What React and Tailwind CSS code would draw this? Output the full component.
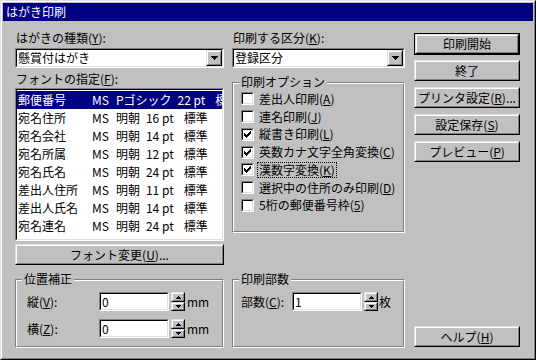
import React from "react";

const FONT = { fontFamily: '"Noto Sans CJK JP", "Noto Sans", sans-serif' };

const fonts = [
  ["郵便番号", "Pゴシック", "22 pt"],
  ["宛名住所", "明朝", "16 pt"],
  ["宛名会社", "明朝", "14 pt"],
  ["宛名所属", "明朝", "12 pt"],
  ["宛名氏名", "明朝", "24 pt"],
  ["差出人住所", "明朝", "11 pt"],
  ["差出人氏名", "明朝", "14 pt"],
  ["宛名連名", "明朝", "24 pt"],
];

const options = [
  { label: "差出人印刷", key: "A", checked: false },
  { label: "連名印刷", key: "J", checked: false },
  { label: "縦書き印刷", key: "L", checked: true },
  { label: "英数カナ文字全角変換", key: "C", checked: true },
  { label: "漢数字変換", key: "K", checked: true, focus: true },
  { label: "選択中の住所のみ印刷", key: "D", checked: false },
  { label: "5桁の郵便番号枠", key: "5", checked: false },
];

// 3D edges, win95 style
const Raised = ({ className = "", innerClass = "", children }) => (
  <div className={`border border-t-[#dfdfdf] border-l-[#dfdfdf] border-r-black border-b-black ${className}`}>
    <div className={`h-full w-full border border-t-white border-l-white border-r-[#808080] border-b-[#808080] ${innerClass}`}>
      {children}
    </div>
  </div>
);

const Sunken = ({ className = "", innerClass = "", children }) => (
  <div className={`border border-t-[#808080] border-l-[#808080] border-r-white border-b-white ${className}`}>
    <div className={`h-full w-full border border-t-black border-l-black border-r-[#dfdfdf] border-b-[#dfdfdf] ${innerClass}`}>
      {children}
    </div>
  </div>
);

const Btn = ({ children, isDefault, className = "" }) => {
  const face = (
    <Raised className="h-full w-full" innerClass="flex items-center justify-center bg-[#c0c0c0] text-[12px] leading-[14px]">
      {children}
    </Raised>
  );
  if (isDefault) {
    return <div className={`border border-black ${className}`}>{face}</div>;
  }
  return <div className={className}>{face}</div>;
};

const Group = ({ title, className = "", innerClass = "", children }) => (
  <div className={`relative border border-t-[#808080] border-l-[#808080] border-r-white border-b-white ${className}`}>
    <div className={`h-full w-full border border-t-white border-l-white border-r-[#808080] border-b-[#808080] ${innerClass}`}>
      {children}
    </div>
    <span className="absolute -top-[8px] left-[6px] bg-[#c0c0c0] px-[2px] text-[12px] leading-[14px]">{title}</span>
  </div>
);

const Tri = ({ w = 7, up = false }) => {
  const rows = Math.ceil(w / 2);
  return (
    <svg width={w} height={rows} shapeRendering="crispEdges">
      {Array.from({ length: rows }).map((_, i) => (
        <rect key={i} x={i} y={up ? rows - 1 - i : i} width={w - i * 2} height="1" fill="black" />
      ))}
    </svg>
  );
};

const Combo = ({ value }) => (
  <Sunken className="h-[20px] w-full" innerClass="flex bg-white">
    <span className="flex-1 pl-[1px] text-[12px] leading-[16px]">{value}</span>
    <Raised className="h-[16px] w-[16px]" innerClass="flex items-center justify-center bg-[#c0c0c0]">
      <Tri />
    </Raised>
  </Sunken>
);

const Spinner = () => (
  <div className="ml-[2px] flex h-[19px] w-[14px] flex-col">
    <Raised className="h-[10px] w-full" innerClass="flex items-center justify-center bg-[#c0c0c0]">
      <Tri w={5} up />
    </Raised>
    <Raised className="h-[9px] w-full" innerClass="flex items-center justify-center bg-[#c0c0c0]">
      <Tri w={5} />
    </Raised>
  </div>
);

const Field = ({ value }) => (
  <Sunken className="h-[19px] w-[70px]" innerClass="bg-white pl-[1px] text-[12px] leading-[15px]">
    {value}
  </Sunken>
);

const Check = () => (
  <svg width="7" height="7" shapeRendering="crispEdges">
    <path
      d="M6 0h1v3h-1zM5 1h1v3h-1zM4 2h1v3h-1zM0 2h1v3h-1zM1 3h1v3h-1zM2 4h1v3h-1zM3 3h1v3h-1z"
      fill="black"
    />
  </svg>
);

const Key = ({ k }) => (
  <>
    (<u className="underline-offset-[1px]">{k}</u>)
  </>
);

export default function App() {
  return (
    <div style={FONT} className="h-[360px] w-[536px] text-black">
      <Raised className="h-full w-full" innerClass="flex flex-col bg-[#c0c0c0] p-[1px]">
        <div className="flex h-[18px] items-center bg-[#000080] pl-[3px] text-[12px] leading-[14px] text-white">
          はがき印刷
        </div>

        <div className="flex flex-1 pl-[12px] pt-[10px]">
          {/* left column */}
          <div className="flex w-[209px] flex-col">
            <div className="h-[14px] pl-[1px] text-[12px] leading-[14px]">
              はがきの種類<Key k="Y" />:
            </div>
            <div className="mt-[3px]">
              <Combo value="懸賞付はがき" />
            </div>
            <div className="mt-[4px] h-[14px] pl-[1px] text-[12px] leading-[14px]">
              フォントの指定<Key k="F" />:
            </div>
            <Sunken className="mt-[2px] h-[153px] w-full" innerClass="overflow-hidden bg-white pt-[1px]">
              {fonts.map(([name, fam, size], i) => (
                <div
                  key={name}
                  className={`flex h-[18px] items-center whitespace-nowrap text-[12px] leading-[14px] ${
                    i === 0 ? "bg-[#000080] text-white" : ""
                  }`}
                >
                  <span className="w-[75px] shrink-0 pl-[1px]">{name}</span>
                  <span>MS</span>
                  <span className="ml-[7px]">{fam}</span>
                  <span className="ml-[6px]">{size}</span>
                  <span className="ml-[10px]">標準</span>
                </div>
              ))}
            </Sunken>
            <Btn className="mt-[3px] h-[21px] w-full">
              フォント変更<Key k="U" />...
            </Btn>
            <Group title="位置補正" className="mt-[14px] h-[69px] w-full" innerClass="flex flex-col gap-[8px] pl-[10px] pt-[11px]">
              <div className="flex items-center text-[12px] leading-[14px]">
                <span className="w-[72px]">
                  縦<Key k="V" />:
                </span>
                <Field value="0" />
                <Spinner />
                <span className="ml-[2px]">mm</span>
              </div>
              <div className="flex items-center text-[12px] leading-[14px]">
                <span className="w-[72px]">
                  横<Key k="Z" />:
                </span>
                <Field value="0" />
                <Spinner />
                <span className="ml-[2px]">mm</span>
              </div>
            </Group>
          </div>

          {/* middle column */}
          <div className="ml-[8px] flex w-[173px] flex-col">
            <div className="h-[14px] pl-[1px] text-[12px] leading-[14px]">
              印刷する区分<Key k="K" />:
            </div>
            <div className="mt-[3px]">
              <Combo value="登録区分" />
            </div>
            <Group title="印刷オプション" className="mt-[14px] h-[151px] w-full" innerClass="flex flex-col pl-[7px] pt-[6px]">
              {options.map((o) => (
                <div key={o.label} className="flex h-[17.75px] items-center text-[12px] leading-[14px]">
                  <Sunken className="h-[13px] w-[13px] shrink-0" innerClass="flex items-center justify-center bg-white">
                    {o.checked && <Check />}
                  </Sunken>
                  <span
                    className={`ml-[3px] border px-[1px] ${
                      o.focus ? "border-dotted border-black" : "border-transparent"
                    }`}
                  >
                    {o.label}
                    <Key k={o.key} />
                  </span>
                </div>
              ))}
            </Group>
            <Group title="印刷部数" className="mt-[46px] h-[69px] w-full" innerClass="pl-[7px] pt-[11px]">
              <div className="flex items-center text-[12px] leading-[14px]">
                <span className="w-[51px]">
                  部数<Key k="C" />:
                </span>
                <Field value="1" />
                <Spinner />
                <span className="ml-[1px]">枚</span>
              </div>
            </Group>
          </div>

          {/* buttons */}
          <div className="ml-[9px] flex w-[106px] flex-col pt-[2px]">
            <Btn isDefault className="h-[22px] w-full">
              印刷開始
            </Btn>
            <Btn className="mt-[5px] h-[21px] w-full">終了</Btn>
            <Btn className="mt-[6px] h-[21px] w-full">
              プリンタ設定<Key k="R" />...
            </Btn>
            <Btn className="mt-[6px] h-[21px] w-full">
              設定保存<Key k="S" />
            </Btn>
            <Btn className="mt-[6px] h-[21px] w-full">
              プレビュー<Key k="P" />
            </Btn>
            <Btn className="mt-[164px] h-[21px] w-full">
              ヘルプ<Key k="H" />
            </Btn>
          </div>
        </div>
      </Raised>
    </div>
  );
}
